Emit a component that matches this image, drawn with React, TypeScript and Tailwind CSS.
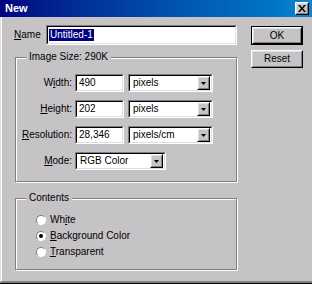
import React from "react"

const font = { fontFamily: '"Liberation Sans", Arial, sans-serif' }

function Sunken({ className = "", children }: { className?: string; children?: React.ReactNode }) {
  return (
    <div className={`border border-t-[#808080] border-l-[#808080] border-b-white border-r-white ${className}`}>
      <div className="w-full h-full border border-t-black border-l-black border-b-[#dfdfdf] border-r-[#dfdfdf] bg-white flex items-center">
        {children}
      </div>
    </div>
  )
}

function Raised({ className = "", children }: { className?: string; children?: React.ReactNode }) {
  return (
    <div className={`border border-t-white border-l-white border-b-black border-r-black ${className}`}>
      <div className="w-full h-full border border-t-[#dfdfdf] border-l-[#dfdfdf] border-b-[#808080] border-r-[#808080] bg-[#c6c3c6] flex items-center justify-center">
        {children}
      </div>
    </div>
  )
}

function Select({ value, className = "" }: { value: string; className?: string }) {
  return (
    <Sunken className={`h-[18px] ${className}`}>
      <span className="flex-1 pl-[3px] text-[10px] text-black leading-none">{value}</span>
      <Raised className="w-[13px] h-[14px] mr-[1px]">
        <svg width="5" height="3" viewBox="0 0 5 3">
          <path d="M0 0h5L2.5 3z" fill="#000" />
        </svg>
      </Raised>
    </Sunken>
  )
}

function Field({ value }: { value: string }) {
  return (
    <Sunken className="w-[49px] h-[18px]">
      <span className="pl-[2px] text-[10px] text-black leading-none">{value}</span>
    </Sunken>
  )
}

function Group({ title, className = "", children }: { title: string; className?: string; children?: React.ReactNode }) {
  return (
    <div className={`relative border border-[#808080] shadow-[inset_1px_1px_0_#fff,1px_1px_0_#fff] ${className}`}>
      <span className="absolute -top-[7px] left-[10px] px-[3px] bg-[#c6c3c6] text-[10px] leading-[12px] text-black">
        {title}
      </span>
      {children}
    </div>
  )
}

function Radio({ label, u, checked = false }: { label: string; u: number; checked?: boolean }) {
  return (
    <div className="h-[16px] flex items-center">
      <div className="w-[10px] h-[10px] rounded-full border border-t-[#808080] border-l-[#808080] border-b-white border-r-white bg-white flex items-center justify-center ml-[20px] mr-[4px]">
        {checked && <div className="w-[4px] h-[4px] rounded-full bg-black" />}
      </div>
      <span className="text-[10px] leading-none text-black">
        {label.slice(0, u)}
        <span className="underline">{label[u]}</span>
        {label.slice(u + 1)}
      </span>
    </div>
  )
}

function Row({ label, u, children }: { label: string; u: number; children?: React.ReactNode }) {
  return (
    <div className="h-[18px] flex items-center">
      <span className="w-[59px] pr-[3px] text-right text-[10px] leading-none text-black">
        {label.slice(0, u)}
        <span className="underline">{label[u]}</span>
        {label.slice(u + 1)}
      </span>
      {children}
    </div>
  )
}

export default function App() {
  return (
    <div className="w-[312px] h-[284px] flex flex-col bg-[#c6c3c6] overflow-hidden" style={font}>
      {/* Title bar */}
      <div className="h-[17px] flex items-center justify-between bg-gradient-to-r from-[#000080] to-[#1084d0] pl-[5px] pr-[3px]">
        <span className="text-white font-bold text-[11px] leading-none">New</span>
        <Raised className="w-[14px] h-[13px]">
          <svg width="8" height="7" viewBox="0 0 8 7">
            <path d="M0 0h2l2 2.5L6 0h2L5 3.5 8 7H6L4 4.5 2 7H0l3-3.5z" fill="#000" />
          </svg>
        </Raised>
      </div>

      {/* Body */}
      <div className="flex-1 flex border-l border-l-[#dfdfdf] border-b-2 border-b-[#808080]">
        <div className="flex-1 flex border-l border-l-white">
          {/* Left column */}
          <div className="pl-[12px] pt-[8px] flex flex-col">
            <div className="flex items-center h-[20px]">
              <span className="w-[32px] text-[10px] leading-none text-black">
                <span className="underline">N</span>ame
              </span>
              <Sunken className="w-[191px] h-[20px]">
                <span className="ml-[1px] px-[1px] bg-[#000080] text-white text-[10px] leading-[12px]">Untitled-1</span>
              </Sunken>
            </div>

            <Group title="Image Size: 290K" className="ml-[1px] mt-[12px] w-[222px] h-[125px]">
              <div className="pt-[16px] flex flex-col gap-[8px]">
                <Row label="Width:" u={1}>
                  <Field value="490" />
                  <Select value="pixels" className="ml-[4px] w-[85px]" />
                </Row>
                <Row label="Height:" u={0}>
                  <Field value="202" />
                  <Select value="pixels" className="ml-[4px] w-[85px]" />
                </Row>
                <Row label="Resolution:" u={0}>
                  <Field value="28,346" />
                  <Select value="pixels/cm" className="ml-[4px] w-[85px]" />
                </Row>
                <Row label="Mode:" u={0}>
                  <Select value="RGB Color" className="w-[91px]" />
                </Row>
              </div>
            </Group>

            <Group title="Contents" className="ml-[1px] mt-[16px] w-[222px] h-[72px]">
              <div className="pt-[13px] flex flex-col">
                <Radio label="White" u={2} />
                <Radio label="Background Color" u={0} checked />
                <Radio label="Transparent" u={0} />
              </div>
            </Group>
          </div>

          {/* Buttons */}
          <div className="ml-[14px] pt-[9px] flex flex-col gap-[5px]">
            <div className="border border-black w-[52px] h-[19px]">
              <Raised className="w-full h-full">
                <span className="text-[10px] leading-none text-black">OK</span>
              </Raised>
            </div>
            <Raised className="w-[52px] h-[18px]">
              <span className="text-[10px] leading-none text-black">Reset</span>
            </Raised>
          </div>
        </div>
      </div>
      <div className="h-0 border-b border-b-black" />
    </div>
  )
}
